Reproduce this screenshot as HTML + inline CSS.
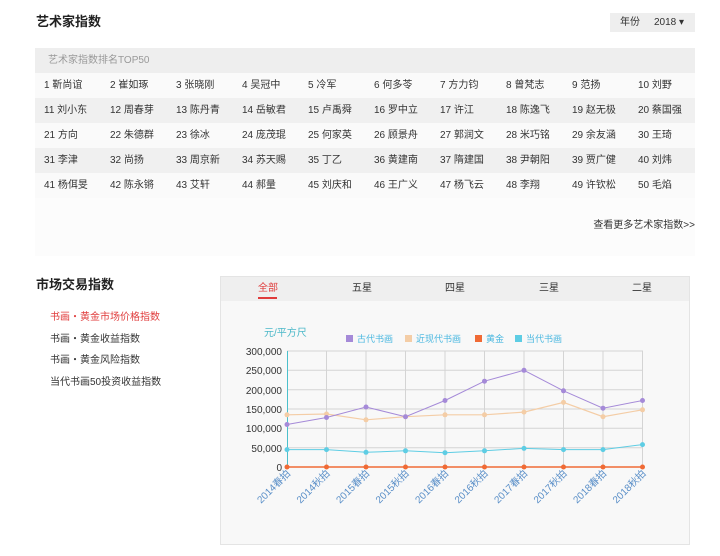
<!DOCTYPE html>
<html><head><meta charset="utf-8"><style>
*{margin:0;padding:0;box-sizing:border-box}
body{width:720px;height:556px;background:#fff;font-family:"Liberation Sans","Noto Sans CJK SC",sans-serif;position:relative;overflow:hidden;color:#333}
.abs{position:absolute}
.t{font-size:13px;font-weight:bold;color:#222}
.tbl{left:35px;top:48px;width:660px}
.tbl .hd{height:25px;background:#eee;color:#999;font-size:10px;line-height:25px;padding-left:13px}
.row{height:25px;font-size:10px;line-height:25px;position:relative}
.row span{position:absolute;top:0;white-space:nowrap}
.r1{background:#fafafa}.r2{background:#f0f0f0}
</style></head><body>
<div class="abs t" style="left:36px;top:11px">艺术家指数</div>
<div class="abs" style="left:610px;top:13px;width:85px;height:19px;background:#eee;font-size:10px;line-height:19px;color:#333"><span style="margin-left:10px">年份</span><span style="margin-left:14px">2018 ▾</span></div>
<div class="abs" style="left:35px;top:198px;width:660px;height:58px;background:#fcfcfc"></div>
<div class="abs tbl">
<div class="hd">艺术家指数排名TOP50</div>
<div class="row r1"><span style="left:9px">1 靳尚谊</span><span style="left:75px">2 崔如琢</span><span style="left:141px">3 张晓刚</span><span style="left:207px">4 吴冠中</span><span style="left:273px">5 冷军</span><span style="left:339px">6 何多苓</span><span style="left:405px">7 方力钧</span><span style="left:471px">8 曾梵志</span><span style="left:537px">9 范扬</span><span style="left:603px">10 刘野</span></div>
<div class="row r2"><span style="left:9px">11 刘小东</span><span style="left:75px">12 周春芽</span><span style="left:141px">13 陈丹青</span><span style="left:207px">14 岳敏君</span><span style="left:273px">15 卢禹舜</span><span style="left:339px">16 罗中立</span><span style="left:405px">17 许江</span><span style="left:471px">18 陈逸飞</span><span style="left:537px">19 赵无极</span><span style="left:603px">20 蔡国强</span></div>
<div class="row r1"><span style="left:9px">21 方向</span><span style="left:75px">22 朱德群</span><span style="left:141px">23 徐冰</span><span style="left:207px">24 庞茂琨</span><span style="left:273px">25 何家英</span><span style="left:339px">26 顾景舟</span><span style="left:405px">27 郭润文</span><span style="left:471px">28 米巧铭</span><span style="left:537px">29 余友涵</span><span style="left:603px">30 王琦</span></div>
<div class="row r2"><span style="left:9px">31 李津</span><span style="left:75px">32 尚扬</span><span style="left:141px">33 周京新</span><span style="left:207px">34 苏天赐</span><span style="left:273px">35 丁乙</span><span style="left:339px">36 黄建南</span><span style="left:405px">37 隋建国</span><span style="left:471px">38 尹朝阳</span><span style="left:537px">39 贾广健</span><span style="left:603px">40 刘炜</span></div>
<div class="row r1"><span style="left:9px">41 杨佴旻</span><span style="left:75px">42 陈永锵</span><span style="left:141px">43 艾轩</span><span style="left:207px">44 郝量</span><span style="left:273px">45 刘庆和</span><span style="left:339px">46 王广义</span><span style="left:405px">47 杨飞云</span><span style="left:471px">48 李翔</span><span style="left:537px">49 许钦松</span><span style="left:603px">50 毛焰</span></div>
</div>
<div class="abs" style="right:25px;top:216px;font-size:10px;color:#333">查看更多艺术家指数&gt;&gt;</div>

<div class="abs t" style="left:36px;top:274px">市场交易指数</div>
<div class="abs" style="left:50px;top:308px;font-size:10px;color:#e03c3c">书画・黄金市场价格指数</div>
<div class="abs" style="left:50px;top:330px;font-size:10px">书画・黄金收益指数</div>
<div class="abs" style="left:50px;top:351px;font-size:10px">书画・黄金风险指数</div>
<div class="abs" style="left:50px;top:373px;font-size:10px">当代书画50投资收益指数</div>

<div class="abs" style="left:220px;top:276px;width:470px;height:269px;background:#f8f8f8;border:1px solid #e4e4e4"></div>
<div class="abs" style="left:221px;top:277px;width:468px;height:24px;background:#efefef;font-size:10px;line-height:24px">
<span class="abs" style="left:37px;color:#e03c3c">全部</span>
<span class="abs" style="left:37px;top:20px;width:19px;height:2px;background:#e03c3c"></span>
<span class="abs" style="left:131px">五星</span>
<span class="abs" style="left:224px">四星</span>
<span class="abs" style="left:318px">三星</span>
<span class="abs" style="left:411px">二星</span>
</div>
<svg class="abs" style="left:0;top:0" width="720" height="556" font-family="Liberation Sans, Noto Sans CJK SC, sans-serif">
<text x="264" y="336" font-size="10" fill="#4bb8c8">元/平方尺</text>
<rect x="346" y="335" width="7" height="7" fill="#a58ad8"/><text x="357" y="342" font-size="9" fill="#4bb8e0">古代书画</text>
<rect x="405" y="335" width="7" height="7" fill="#f4cda6"/><text x="416" y="342" font-size="9" fill="#4bb8e0">近现代书画</text>
<rect x="475" y="335" width="7" height="7" fill="#f06a35"/><text x="486" y="342" font-size="9" fill="#4bb8e0">黄金</text>
<rect x="515" y="335" width="7" height="7" fill="#5ecde4"/><text x="526" y="342" font-size="9" fill="#4bb8e0">当代书画</text>
<g stroke="#d4d4d4" stroke-width="1">
<line x1="287" y1="351" x2="643" y2="351"/><line x1="287" y1="370.3" x2="643" y2="370.3"/><line x1="287" y1="389.7" x2="643" y2="389.7"/><line x1="287" y1="409" x2="643" y2="409"/><line x1="287" y1="428.3" x2="643" y2="428.3"/><line x1="287" y1="447.7" x2="643" y2="447.7"/>
<line x1="326.5" y1="351" x2="326.5" y2="467"/><line x1="366" y1="351" x2="366" y2="467"/><line x1="405.5" y1="351" x2="405.5" y2="467"/><line x1="445" y1="351" x2="445" y2="467"/><line x1="484.5" y1="351" x2="484.5" y2="467"/><line x1="524" y1="351" x2="524" y2="467"/><line x1="563.5" y1="351" x2="563.5" y2="467"/><line x1="603" y1="351" x2="603" y2="467"/><line x1="642.5" y1="351" x2="642.5" y2="467"/>
</g>
<line x1="287.5" y1="351" x2="287.5" y2="467" stroke="#4bc0cc" stroke-width="1"/>
<g font-size="10" fill="#333" text-anchor="end">
<text x="282" y="355">300,000</text><text x="282" y="374">250,000</text><text x="282" y="394">200,000</text><text x="282" y="413">150,000</text><text x="282" y="432">100,000</text><text x="282" y="452">50,000</text><text x="282" y="471">0</text>
</g>
<polyline fill="none" stroke="#f4cda6" stroke-width="1.2" points="287,414.8 326.5,414 366,419.8 405.5,416.7 445,414.8 484.5,414.8 524,412.1 563.5,402.4 603,416.7 642.5,409.8"/>
<polyline fill="none" stroke="#a58ad8" stroke-width="1" points="287,424.5 326.5,417.5 366,407 405.5,416.7 445,400.5 484.5,381.2 524,370.3 563.5,390.8 603,408.2 642.5,400.5"/>
<polyline fill="none" stroke="#5ecde4" stroke-width="1" points="287,449.6 326.5,449.6 366,452.3 405.5,450.8 445,452.7 484.5,450.8 524,448.4 563.5,449.6 603,449.6 642.5,444.6"/>
<line x1="287" y1="467" x2="643" y2="467" stroke="#f06a35" stroke-width="1.5"/>
<g fill="#f4cda6"><circle cx="287" cy="414.8" r="2.5"/><circle cx="326.5" cy="414" r="2.5"/><circle cx="366" cy="419.8" r="2.5"/><circle cx="405.5" cy="416.7" r="2.5"/><circle cx="445" cy="414.8" r="2.5"/><circle cx="484.5" cy="414.8" r="2.5"/><circle cx="524" cy="412.1" r="2.5"/><circle cx="563.5" cy="402.4" r="2.5"/><circle cx="603" cy="416.7" r="2.5"/><circle cx="642.5" cy="409.8" r="2.5"/></g>
<g fill="#a58ad8"><circle cx="287" cy="424.5" r="2.5"/><circle cx="326.5" cy="417.5" r="2.5"/><circle cx="366" cy="407" r="2.5"/><circle cx="405.5" cy="416.7" r="2.5"/><circle cx="445" cy="400.5" r="2.5"/><circle cx="484.5" cy="381.2" r="2.5"/><circle cx="524" cy="370.3" r="2.5"/><circle cx="563.5" cy="390.8" r="2.5"/><circle cx="603" cy="408.2" r="2.5"/><circle cx="642.5" cy="400.5" r="2.5"/></g>
<g fill="#5ecde4"><circle cx="287" cy="449.6" r="2.5"/><circle cx="326.5" cy="449.6" r="2.5"/><circle cx="366" cy="452.3" r="2.5"/><circle cx="405.5" cy="450.8" r="2.5"/><circle cx="445" cy="452.7" r="2.5"/><circle cx="484.5" cy="450.8" r="2.5"/><circle cx="524" cy="448.4" r="2.5"/><circle cx="563.5" cy="449.6" r="2.5"/><circle cx="603" cy="449.6" r="2.5"/><circle cx="642.5" cy="444.6" r="2.5"/></g>
<g fill="#f06a35"><circle cx="287" cy="467" r="2.5"/><circle cx="326.5" cy="467" r="2.5"/><circle cx="366" cy="467" r="2.5"/><circle cx="405.5" cy="467" r="2.5"/><circle cx="445" cy="467" r="2.5"/><circle cx="484.5" cy="467" r="2.5"/><circle cx="524" cy="467" r="2.5"/><circle cx="563.5" cy="467" r="2.5"/><circle cx="603" cy="467" r="2.5"/><circle cx="642.5" cy="467" r="2.5"/></g>
<g font-size="10" fill="#5a8fc8" text-anchor="end">
<text transform="translate(291,474) rotate(-45)">2014春拍</text>
<text transform="translate(330.5,474) rotate(-45)">2014秋拍</text>
<text transform="translate(370,474) rotate(-45)">2015春拍</text>
<text transform="translate(409.5,474) rotate(-45)">2015秋拍</text>
<text transform="translate(449,474) rotate(-45)">2016春拍</text>
<text transform="translate(488.5,474) rotate(-45)">2016秋拍</text>
<text transform="translate(528,474) rotate(-45)">2017春拍</text>
<text transform="translate(567.5,474) rotate(-45)">2017秋拍</text>
<text transform="translate(607,474) rotate(-45)">2018春拍</text>
<text transform="translate(646.5,474) rotate(-45)">2018秋拍</text>
</g>
</svg>
</body></html>
